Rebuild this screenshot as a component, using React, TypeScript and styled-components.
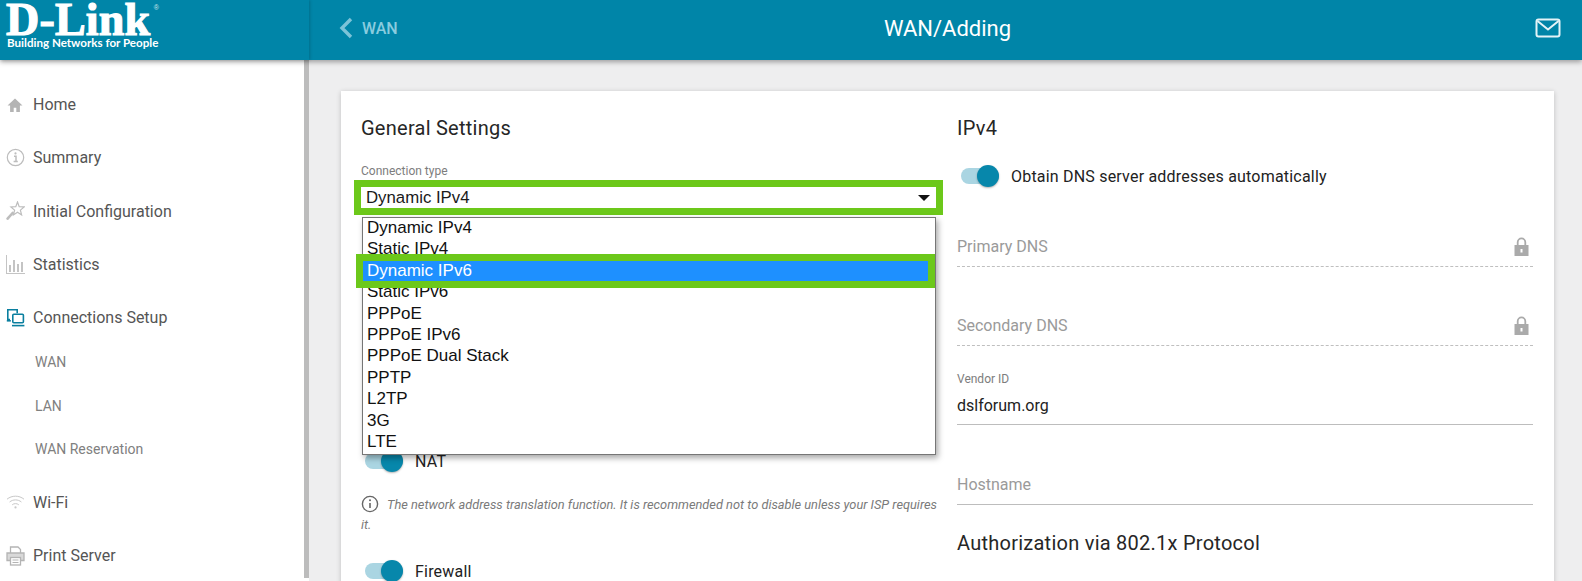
import styled, { createGlobalStyle } from 'styled-components'

const Global = createGlobalStyle`
  html, body {
    margin: 0;
    padding: 0;
    background: #eeeeef;
    overflow: hidden;
  }
  * {
    box-sizing: border-box;
  }
`

const connectionTypes = [
  'Dynamic IPv4',
  'Static IPv4',
  'Dynamic IPv6',
  'Static IPv6',
  'PPPoE',
  'PPPoE IPv6',
  'PPPoE Dual Stack',
  'PPTP',
  'L2TP',
  '3G',
  'LTE',
]

const HomeIcon = () => (
  <svg width="18" height="16" viewBox="0 0 18 16" fill="#b4b4b4">
    <path d="M9 1.5 1.5 8.5h2.6V15h3.6v-4.2h2.6V15h3.6V8.5h2.6z" />
  </svg>
)

const InfoIcon = () => (
  <svg width="19" height="19" viewBox="0 0 19 19" fill="none" stroke="#bdbdbd">
    <circle cx="9.5" cy="9.5" r="8.2" strokeWidth="1.2" />
    <path d="M8 8.2h2v5M7.6 13.4h4.2" strokeWidth="1.5" />
    <circle cx="9.5" cy="5.4" r="1.1" fill="#bdbdbd" stroke="none" />
  </svg>
)

const WizardIcon = () => (
  <svg width="19" height="20" viewBox="0 0 19 20" fill="none" stroke="#bdbdbd" strokeWidth="1.2">
    <path d="M11.5 1 13.2 5.6l5 .3-3.8 3.2 1.2 4.8-4.1-2.7-4.1 2.7 1.2-4.8-3.7-3.2 4.9-.3z" />
    <path d="M6.6 12 1.6 17.6" strokeWidth="2.6" strokeLinecap="round" />
  </svg>
)

const StatsIcon = () => (
  <svg width="19" height="19" viewBox="0 0 19 19" fill="#c4c4c4">
    <path d="M0 0h1v18h18v1H0z" />
    <path d="M3 10h2v7H3zM7 5h2v12H7zM11 9h2v8h-2zM15 7h2v10h-2z" />
  </svg>
)

const ConnectionsIcon = () => (
  <svg width="19" height="19" viewBox="0 0 19 19" fill="none" stroke="#0a7f9f" strokeWidth="1.6">
    <path d="M4 11.5H1.8V1.8h9.4v3.4" />
    <path d="M.8 12.8h4" />
    <rect x="6.8" y="6.2" width="10.6" height="8.6" rx="1" />
    <path d="M6 17.6h12.4" />
  </svg>
)

const WifiIcon = () => (
  <svg width="19" height="16" viewBox="0 0 19 16" fill="none" stroke="#c8c8c8" strokeWidth="1">
    <path d="M1 5.2c4.8-4 12.2-4 17 0" />
    <path d="M3.6 8c3.4-2.8 8.4-2.8 11.8 0" />
    <path d="M6.2 10.8c2-1.6 4.6-1.6 6.6 0" />
    <circle cx="9.5" cy="13.4" r="1.1" fill="#c8c8c8" stroke="none" />
  </svg>
)

const PrinterIcon = () => (
  <svg width="19" height="20" viewBox="0 0 19 20" fill="none" stroke="#b4b4b4" strokeWidth="1.3">
    <path d="M4.5 7V1h7.5L14.5 3.5V7" />
    <path d="M4.5 14.5H1V7h17v7.5h-3.5" fill="#d9d9d9" />
    <rect x="4.5" y="11.5" width="10" height="7.5" fill="#fff" />
    <path d="M6.5 14h6M6.5 16.5h6" strokeWidth="1" />
  </svg>
)

const BackIcon = () => (
  <svg width="14" height="22" viewBox="0 0 14 22" fill="none" stroke="#7cc3d8" strokeWidth="3.4">
    <path d="M12 2 3 11l9 9" />
  </svg>
)

const MailIcon = () => (
  <svg width="26" height="20" viewBox="0 0 26 20" fill="none" stroke="#e4f3f7" strokeWidth="2">
    <rect x="1.5" y="1.5" width="23" height="17" rx="2" />
    <path d="M2.5 3 13 11.5 23.5 3" />
  </svg>
)

const LockIcon = () => (
  <svg width="15" height="19" viewBox="0 0 15 19" fill="#aaaaaa">
    <path d="M2.8 8V5.2a4.7 4.7 0 0 1 9.4 0V8h-1.8V5.2a2.9 2.9 0 0 0-5.8 0V8z" />
    <path d="M.5 8h14v11H.5zM6.5 12v3.4h2V12z" fillRule="evenodd" />
  </svg>
)

const NoteIcon = () => (
  <svg width="18" height="18" viewBox="0 0 18 18" fill="none" stroke="#666">
    <circle cx="9" cy="9" r="7.6" strokeWidth="1.4" />
    <path d="M9 8v5" strokeWidth="1.6" />
    <circle cx="9" cy="5.3" r="1" fill="#666" stroke="none" />
  </svg>
)

export default function App() {
  return (
    <>
      <Global />
      <Page>
        <Header>
          <LogoBox>
            <LogoWord>
              D-Link<LogoMark>®</LogoMark>
            </LogoWord>
            <LogoTag>Building Networks for People</LogoTag>
          </LogoBox>
          <TopBar>
            <BackLink>
              <BackIcon />
              WAN
            </BackLink>
            <PageTitle>WAN/Adding</PageTitle>
            <MailButton>
              <MailIcon />
            </MailButton>
          </TopBar>
        </Header>
        <Body>
          <Sidebar>
            <NavItem>
              <NavIcon><HomeIcon /></NavIcon>
              Home
            </NavItem>
            <NavItem>
              <NavIcon><InfoIcon /></NavIcon>
              Summary
            </NavItem>
            <NavItem>
              <NavIcon><WizardIcon /></NavIcon>
              Initial Configuration
            </NavItem>
            <NavItem>
              <NavIcon><StatsIcon /></NavIcon>
              Statistics
            </NavItem>
            <NavItem>
              <NavIcon><ConnectionsIcon /></NavIcon>
              Connections Setup
            </NavItem>
            <SubList>
              <SubItem>WAN</SubItem>
              <SubItem>LAN</SubItem>
              <SubItem>WAN Reservation</SubItem>
            </SubList>
            <NavItem>
              <NavIcon><WifiIcon /></NavIcon>
              Wi-Fi
            </NavItem>
            <NavItem>
              <NavIcon><PrinterIcon /></NavIcon>
              Print Server
            </NavItem>
          </Sidebar>
          <Content>
            <Card>
              <Column>
                <SectionTitle>General Settings</SectionTitle>
                <SmallLabel>Connection type</SmallLabel>
                <SelectField>
                  Dynamic IPv4
                  <SelectArrow />
                  <OptionList>
                    {connectionTypes.map((name) => (
                      <Option key={name} $selected={name === 'Dynamic IPv6'}>
                        {name}
                      </Option>
                    ))}
                    <OptionHighlight />
                  </OptionList>
                </SelectField>
                <ToggleRow $top={234}>
                  <Toggle />
                  NAT
                </ToggleRow>
                <Note>
                  <NoteGlyph><NoteIcon /></NoteGlyph>
                  The network address translation function. It is recommended not to disable unless your ISP requires it.
                </Note>
                <ToggleRow $top={24}>
                  <Toggle />
                  Firewall
                </ToggleRow>
              </Column>
              <Column>
                <SectionTitle>IPv4</SectionTitle>
                <ToggleRow $top={24}>
                  <Toggle />
                  Obtain DNS server addresses automatically
                </ToggleRow>
                <Field $top={39} $dashed>
                  <Placeholder>Primary DNS</Placeholder>
                  <LockIcon />
                </Field>
                <Field $top={39} $dashed>
                  <Placeholder>Secondary DNS</Placeholder>
                  <LockIcon />
                </Field>
                <LabelledField>
                  <SmallLabel>Vendor ID</SmallLabel>
                  <FieldValue>dslforum.org</FieldValue>
                </LabelledField>
                <Field $top={40}>
                  <Placeholder>Hostname</Placeholder>
                </Field>
                <SectionTitle $top={26}>Authorization via 802.1x Protocol</SectionTitle>
              </Column>
            </Card>
          </Content>
        </Body>
      </Page>
    </>
  )
}

const Page = styled.div`
  width: 1582px;
  height: 581px;
  display: flex;
  flex-direction: column;
  overflow: hidden;
  font-family: Roboto, 'Liberation Sans', sans-serif;
`

const Header = styled.header`
  height: 60px;
  flex: none;
  display: flex;
  background: #0085a8;
  box-shadow: 0 2px 5px rgba(0, 0, 0, 0.35);
  position: relative;
  z-index: 2;
`

const LogoBox = styled.div`
  width: 309px;
  flex: none;
  padding: 0 0 0 6px;
  color: #fff;
  box-shadow: 1px 0 3px rgba(0, 0, 0, 0.18);
`

const LogoWord = styled.div`
  position: relative;
  width: 152px;
  height: 36px;
  font-family: 'Liberation Serif', serif;
  font-weight: 700;
  font-size: 46px;
  line-height: 40px;
  letter-spacing: 0.2px;
  -webkit-text-stroke: 1.2px #fff;
  white-space: nowrap;
`

const LogoMark = styled.span`
  position: absolute;
  top: 4px;
  right: -1px;
  font-family: 'Liberation Sans', sans-serif;
  font-size: 7px;
  line-height: 8px;
  letter-spacing: 0;
  -webkit-text-stroke: 0;
  font-weight: 400;
  color: #cfe6ec;
`

const LogoTag = styled.div`
  margin-left: 1px;
  font-family: Lato, sans-serif;
  font-weight: 700;
  font-size: 11.6px;
  line-height: 14px;
  white-space: nowrap;
`

const TopBar = styled.div`
  flex: 1;
  display: grid;
  grid-template-columns: 1fr auto 1fr;
  align-items: center;
  padding: 0 21px 4px 30px;
`

const BackLink = styled.div`
  display: flex;
  align-items: center;
  gap: 9px;
  color: #8accdf;
  font-size: 16px;
  font-weight: 500;
`

const PageTitle = styled.div`
  margin: 2px 5px 0 0;
  color: #fff;
  font-size: 22px;
  line-height: 28px;
`

const MailButton = styled.div`
  display: flex;
  justify-content: flex-end;
`

const Body = styled.div`
  flex: 1;
  min-height: 0;
  display: flex;
`

const Sidebar = styled.nav`
  width: 309px;
  height: 521px;
  flex: none;
  padding-top: 18px;
  background: linear-gradient(to right, #fff 304px, #bcbcbc 304px) no-repeat 0 0 / 309px 518px #fff;
`

const NavItem = styled.div`
  height: 53.25px;
  display: flex;
  align-items: center;
  color: #555;
  font-size: 16px;
`

const NavIcon = styled.span`
  width: 33px;
  flex: none;
  display: flex;
  padding-left: 6px;
`

const SubList = styled.div`
  margin: -4px 0 5px;
`

const SubItem = styled.div`
  height: 43.5px;
  padding-left: 35px;
  display: flex;
  align-items: center;
  color: #808080;
  font-size: 14px;
`

const Content = styled.main`
  flex: 1;
  min-width: 0;
  padding: 31px 28px 0 32px;
`

const Card = styled.section`
  height: 520px;
  padding: 25px 21px 0 20px;
  display: grid;
  grid-template-columns: 575px 576px;
  column-gap: 21px;
  background: #fff;
  box-shadow: 0 1px 5px rgba(0, 0, 0, 0.2);
`

const Column = styled.div`
  display: flex;
  flex-direction: column;
`

const SectionTitle = styled.h2<{ $top?: number }>`
  margin: ${(p) => p.$top ?? 0}px 0 0;
  height: 24px;
  color: #262626;
  font-size: 20px;
  font-weight: 400;
  line-height: 24px;
  letter-spacing: 0.25px;
  white-space: nowrap;
`

const SmallLabel = styled.div`
  margin-top: 24px;
  height: 14px;
  color: #7d7d7d;
  font-size: 12px;
  line-height: 14px;
`

const SelectField = styled.div`
  position: relative;
  height: 35px;
  margin: 2px -7px 0 -7px;
  padding-left: 5px;
  display: flex;
  align-items: center;
  border: 7px solid #6cc81a;
  color: #1a1a1a;
  font-family: 'Liberation Sans', sans-serif;
  font-size: 16.8px;
`

const SelectArrow = styled.span`
  margin-left: auto;
  margin-right: 6px;
  width: 0;
  height: 0;
  border-left: 6px solid transparent;
  border-right: 6px solid transparent;
  border-top: 6px solid #111;
`

const OptionList = styled.ul`
  position: absolute;
  top: 30px;
  left: 1px;
  width: 574px;
  margin: 0;
  padding: 0 0 1px;
  list-style: none;
  background: #fff;
  border: 1px solid #767676;
  box-shadow: 2px 3px 6px rgba(0, 0, 0, 0.35);
  z-index: 3;
`

const Option = styled.li<{ $selected?: boolean }>`
  height: 21.4px;
  padding-left: 4px;
  color: ${(p) => (p.$selected ? '#fff' : '#111')};
  background: ${(p) => (p.$selected ? '#1e90ff' : 'transparent')};
  font-family: 'Liberation Sans', sans-serif;
  font-size: 17px;
  line-height: 20px;
  white-space: nowrap;
`

const OptionHighlight = styled.li`
  position: absolute;
  top: 36px;
  left: -7px;
  width: 579px;
  height: 34px;
  border: 7px solid #6cc81a;
`

const ToggleRow = styled.div<{ $top: number }>`
  height: 24px;
  margin-top: ${(p) => p.$top}px;
  padding-left: 4px;
  display: flex;
  align-items: center;
  gap: 12px;
  color: #222;
  font-size: 16px;
  letter-spacing: 0.2px;
  white-space: nowrap;
`

const Toggle = styled.span`
  position: relative;
  width: 38px;
  height: 16px;
  flex: none;
  border-radius: 8px;
  background: #aad5e2;

  &::after {
    content: '';
    position: absolute;
    top: -3px;
    right: 0;
    width: 22px;
    height: 22px;
    border-radius: 50%;
    background: #0787ab;
    box-shadow: 0 1px 2px rgba(0, 0, 0, 0.3);
  }
`

const Note = styled.p`
  margin: 22px -5px 0 0;
  color: #7a7a7a;
  font-size: 12.8px;
  font-style: italic;
  line-height: 20px;
`

const NoteGlyph = styled.span`
  display: inline-flex;
  height: 18px;
  vertical-align: -4px;
  margin-right: 8px;
`

const Field = styled.div<{ $top: number; $dashed?: boolean }>`
  height: 40px;
  margin-top: ${(p) => p.$top}px;
  padding-bottom: 1px;
  padding-right: 4px;
  display: flex;
  align-items: center;
  justify-content: space-between;
  border-bottom: 1px ${(p) => (p.$dashed ? 'dashed #bfbfbf' : 'solid #bdbdbd')};
`

const Placeholder = styled.span`
  color: #9a9a9a;
  font-size: 16px;
`

const LabelledField = styled.div`
  height: 58px;
  margin-top: 21px;
  border-bottom: 1px solid #bdbdbd;

  ${SmallLabel} {
    margin-top: 5px;
  }
`

const FieldValue = styled.div`
  margin-top: 10px;
  color: #222;
  font-size: 16px;
  line-height: 20px;
`
